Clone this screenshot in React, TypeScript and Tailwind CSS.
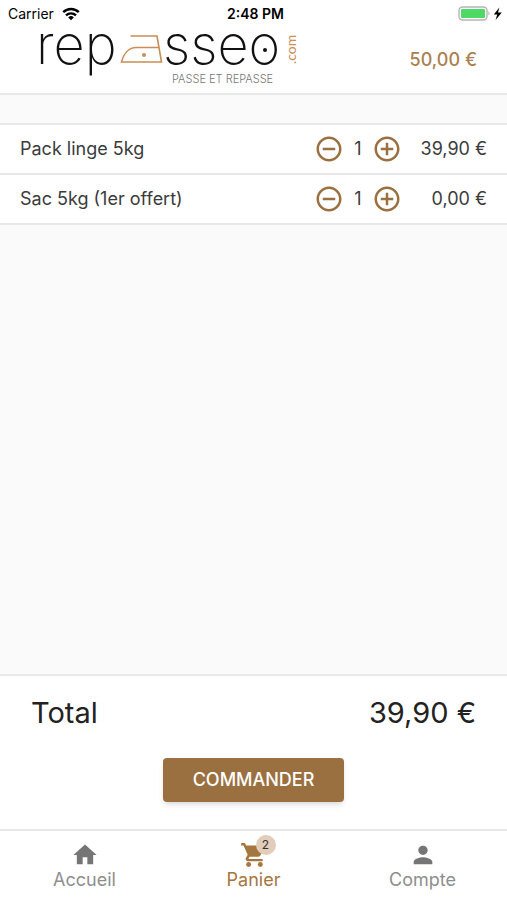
import React, { useState } from 'react';
import { MdAddCircleOutline, MdHome, MdPerson, MdRemoveCircleOutline } from 'react-icons/md';

const formatPrice = (value: number) => `${value.toFixed(2).replace('.', ',')} €`;

const StatusBar = () => (
  <div className="grid grid-cols-3 items-center h-7 pl-2 pr-1 text-sm text-black">
    <div className="flex items-center gap-2">
      <span>Carrier</span>
      <svg width="18" height="14" viewBox="0 0 18 14" fill="none" stroke="currentColor" strokeWidth="2.4" aria-label="Wi-Fi">
        <path d="M1.2 5.2a11.2 11.2 0 0 1 15.6 0" />
        <path d="M4 8.4a7.2 7.2 0 0 1 10 0" />
        <path d="M9 13.2 6.2 10.4a4 4 0 0 1 5.6 0z" fill="currentColor" stroke="none" />
      </svg>
    </div>
    <span className="text-center font-semibold">2:48 PM</span>
    <div className="flex items-center justify-end">
      <svg width="45" height="16" viewBox="0 0 45 16" aria-label="Battery">
        <rect x="1" y="1" width="28" height="13" rx="3.5" fill="#fff" stroke="#b5b5b8" strokeWidth="1.4" />
        <rect x="3" y="3" width="24" height="9" rx="1.2" fill="#4cd964" />
        <path d="M30.5 5.3q2 2.2 0 4.4z" fill="#a5a5a8" />
        <path d="M41.4 1.6 35.8 8.6h3.4l-1.6 5.4 6.2-7.6h-3.8z" fill="#000" />
      </svg>
    </div>
  </div>
);

const Logo = () => (
  <svg width="266" height="64" viewBox="0 0 266 64" className="overflow-visible" aria-label="repasseo.com">
    <g fontFamily="Inter, sans-serif" fontWeight="200" fontSize="54" fill="#111">
      <text x="0" y="36">rep</text>
      <text x="127" y="36">sseo</text>
    </g>
    <circle cx="229" cy="22" r="2" fill="#111" />
    <path d="M94.5 8H121l4.5 26h-40c2-8 7-14.5 15-14.5h22" fill="none" stroke="#c98d55" strokeWidth="1.6" />
    <circle cx="108" cy="27" r="2" fill="#c98d55" />
    <text transform="translate(260 36) rotate(-90)" fontFamily="Lato, sans-serif" fontSize="14" fill="#c98d55">
      .com
    </text>
    <text x="136" y="55" fontFamily="Inter, sans-serif" fontSize="11" fontWeight="300" fill="#777">
      PASSE ET REPASSE
    </text>
  </svg>
);

const CartIcon = () => (
  <svg width="28" height="28" viewBox="0 0 24 24" fill="currentColor" aria-hidden="true">
    <circle cx="7.4" cy="20.2" r="2.1" />
    <circle cx="17.4" cy="20.2" r="2.1" />
    <path d="M1 1.8v2h2l3.6 8-1.5 2.5c-.9 1.5.2 3 1.9 3h12.4v-1.9H7.6c-.3 0-.4-.3-.3-.5l.9-1.5h7.6c.7 0 1.3-.4 1.6-1L21 5.3c.4-.7-.1-1.4-.9-1.4H5.2l-.9-2.1z" />
  </svg>
);

type CartItem = { label: string; price: number; quantity: number };

const CartRow = ({ item, onChange }: { item: CartItem; onChange: (quantity: number) => void }) => (
  <li className="flex items-center h-[50px] px-5 border-b-2 border-[#e8e8e8] bg-white text-[#3b3b3b]">
    <span className="flex-1">{item.label}</span>
    <div className="flex items-center text-[#9b7040]">
      <button type="button" aria-label={`Retirer ${item.label}`} onClick={() => onChange(Math.max(0, item.quantity - 1))}>
        <MdRemoveCircleOutline size={30} />
      </button>
      <span className="w-7 text-center text-[#3b3b3b]">{item.quantity}</span>
      <button type="button" aria-label={`Ajouter ${item.label}`} onClick={() => onChange(item.quantity + 1)}>
        <MdAddCircleOutline size={30} />
      </button>
    </div>
    <span className="w-[85px] text-right">{formatPrice(item.price)}</span>
  </li>
);

export default function App() {
  const [items, setItems] = useState<CartItem[]>([
    { label: 'Pack linge 5kg', price: 39.9, quantity: 1 },
    { label: 'Sac 5kg (1er offert)', price: 0, quantity: 1 },
  ]);

  const total = items.reduce((sum, item) => sum + item.price * item.quantity, 0);
  const count = items.reduce((sum, item) => sum + item.quantity, 0);

  const setQuantity = (index: number, quantity: number) => {
    setItems(items.map((item, idx) => (idx === index ? { ...item, quantity } : item)));
  };

  return (
    <div className="flex flex-col min-h-screen bg-[#fafafa] font-[Inter,sans-serif] text-lg">
      <header className="bg-white border-b-2 border-[#e8e8e8]">
        <StatusBar />
        <div className="flex items-center justify-between pl-9 pr-[30px] pb-px">
          <Logo />
          <span className="font-medium text-[#ad804f]">50,00 €</span>
        </div>
      </header>

      <main className="flex-1 pt-7">
        <ul className="border-t-2 border-[#e8e8e8]">
          {items.map((item, idx) => (
            <CartRow key={item.label} item={item} onChange={(quantity) => setQuantity(idx, quantity)} />
          ))}
        </ul>
      </main>

      {/* Total */}
      <section className="flex flex-col items-center pt-4 pb-[27px] border-t-2 border-[#e8e8e8] bg-white">
        <div className="flex justify-between w-full px-[31px] text-[29px] leading-[42px] text-[#222]">
          <span>Total</span>
          <span>{formatPrice(total)}</span>
        </div>
        <button type="button" className="mt-6 h-11 px-[30px] rounded bg-[#9b7040] font-medium text-white shadow-md">
          COMMANDER
        </button>
      </section>

      {/* Bottom navigation */}
      <nav className="grid grid-cols-3 h-[71px] border-t-2 border-[#e8e8e8] bg-white text-[#8e8e8e]">
        <a href="#accueil" className="flex flex-col items-center pt-2.5">
          <MdHome size={28} className="text-[#757575]" />
          <span className="leading-[22px]">Accueil</span>
        </a>
        <a href="#panier" aria-current="page" className="flex flex-col items-center pt-2.5 text-[#a6763f]">
          <span className="relative">
            <CartIcon />
            <span className="absolute -top-1.5 -right-2 w-5 h-5 rounded-full bg-[#e1cdb9] text-center text-xs leading-5 text-[#333]">
              {count}
            </span>
          </span>
          <span className="leading-[22px]">Panier</span>
        </a>
        <a href="#compte" className="flex flex-col items-center pt-2.5">
          <MdPerson size={28} className="text-[#757575]" />
          <span className="leading-[22px]">Compte</span>
        </a>
      </nav>
    </div>
  );
}
